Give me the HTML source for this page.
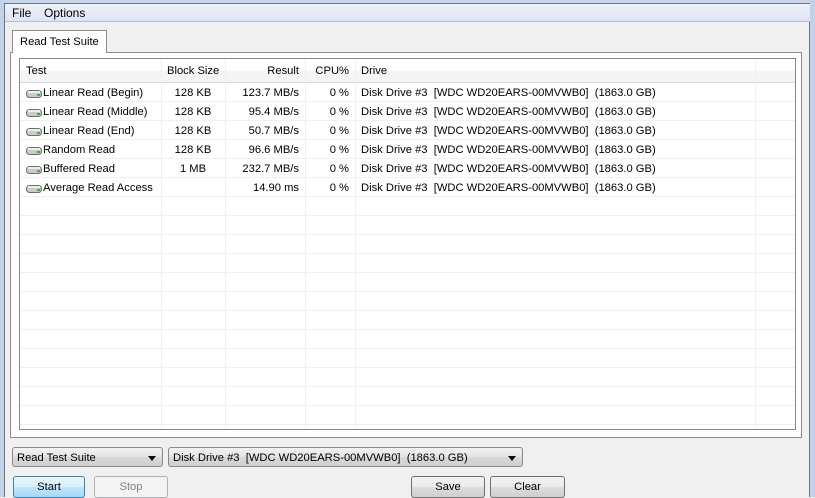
<!DOCTYPE html><html><head><style>
body{margin:0;width:815px;height:497px;overflow:hidden;background:#f0f0f0;font-family:"Liberation Sans",sans-serif;font-size:11.2px;color:#000;position:relative}
.a{position:absolute}
.cell{position:absolute;top:0;height:19px;line-height:19px;white-space:nowrap}
.btn{position:absolute;height:20px;border:1px solid #707070;border-radius:3px;background:linear-gradient(#f2f2f2,#ebebeb 50%,#dddddd 50%,#cfcfcf);text-align:center;line-height:20px}
.cb{position:absolute;height:20px;border:1px solid #8a8a8a;border-radius:3px;background:linear-gradient(#f2f2f2,#e4e4e4 50%,#d9d9d9 50%,#d0d0d0);line-height:20px;padding-left:4px;box-sizing:border-box}
.cb:after{content:"";position:absolute;right:6px;top:8px;border-left:4px solid transparent;border-right:4px solid transparent;border-top:5px solid #000}
</style></head><body>
<div class="a" style="left:0;top:0;width:815px;height:4px;background:#c9d6ea"></div>
<div class="a" style="left:0;top:0;width:4px;height:497px;background:#c3d2e8"></div>
<div class="a" style="left:810px;top:0;width:5px;height:497px;background:#c3d2e8"></div>
<div class="a" style="left:4px;top:3px;width:806px;height:494px;border-left:1px solid #6a7585;border-right:1px solid #6a7585;border-top:1px solid #6a7585;box-sizing:border-box"></div>
<div class="a" style="left:5px;top:4px;width:805px;height:17px;background:linear-gradient(#eef1fa,#dfe4f5);border-bottom:1px solid #b9bfd8"></div>
<div class="a" style="left:12px;top:5px;line-height:16px;font-size:12px">File</div>
<div class="a" style="left:44px;top:5px;line-height:16px;font-size:12px">Options</div>
<div class="a" style="left:10px;top:52px;width:792px;height:386px;border:1px solid #8d8d8d;background:#fff;box-sizing:border-box"></div>
<div class="a" style="left:12px;top:30px;width:95px;height:23px;border:1px solid #8d8d8d;border-bottom:none;background:#fff;line-height:22px;padding-left:7px;box-sizing:border-box">Read Test Suite</div>
<div class="a" style="left:19px;top:58px;width:777px;height:372px;border:1px solid #828790;background:#fff;box-sizing:border-box;overflow:hidden">
<div class="a" style="left:0;top:0;width:775px;height:23px;background:linear-gradient(#fff,#fff 50%,#f4f5f7 50%,#f4f5f7);border-bottom:1px solid #d5d5d5"></div>
<div id="g"></div>
</div>
<div class="cb" style="left:12px;top:447px;width:151px">Read Test Suite</div>
<div class="cb" style="left:168px;top:447px;width:355px">Disk Drive #3&nbsp; [WDC WD20EARS-00MVWB0]&nbsp; (1863.0 GB)</div>
<div class="btn" style="left:13px;top:476px;width:70px;border-color:#3c7fb1;background:linear-gradient(#eaf6fd,#d9f0fc 50%,#bee6fd 50%,#a7d9f5)">Start</div>
<div class="btn" style="left:94px;top:476px;width:72px;border-color:#adb2b5;background:#f4f4f4;color:#838383">Stop</div>
<div class="btn" style="left:411px;top:476px;width:72px">Save</div>
<div class="btn" style="left:490px;top:476px;width:73px">Clear</div>
<script>
var cols=[[0,141],[141,64],[205,80],[285,50],[335,400],[735,40]];
var g=document.getElementById('g'),h='';
cols.forEach(function(c,i){if(i>0)h+='<div class="a" style="left:'+(c[0])+'px;top:0;width:1px;height:372px;background:#f0f0f0"></div>';});
for(var y=42;y<372;y+=19)h+='<div class="a" style="left:0;top:'+y+'px;width:775px;height:1px;background:#f0f0f0"></div>';
var hd=[['Test','left',6],['Block Size','left',6],['Result','right',6],['CPU%','right',6],['Drive','left',6]];
hd.forEach(function(t,i){var c=cols[i];h+='<div class="cell" style="left:'+c[0]+'px;width:'+c[1]+'px;top:3px;text-align:'+t[1]+';box-sizing:border-box;padding:0 '+t[2]+'px">'+t[0]+'</div>';});
var rows=[['Linear Read (Begin)','128 KB','123.7 MB/s'],['Linear Read (Middle)','128 KB','95.4 MB/s'],['Linear Read (End)','128 KB','50.7 MB/s'],['Random Read','128 KB','96.6 MB/s'],['Buffered Read','1 MB','232.7 MB/s'],['Average Read Access','','14.90 ms']];
rows.forEach(function(r,k){var t=24+19*k;
h+='<svg class="a" style="left:6px;top:'+(t+4)+'px" width="16" height="11"><rect x="0.5" y="3.5" width="15" height="7" rx="3" fill="#c8cbc8" stroke="#6c6f6c"/><rect x="2" y="4" width="12" height="2" fill="#eee"/><rect x="11" y="7" width="3" height="2" fill="#3bb33b"/></svg>';
h+='<div class="cell" style="top:'+(t+1)+'px;left:23px">'+r[0]+'</div>';
h+='<div class="cell" style="top:'+(t+1)+'px;left:141px;width:64px;text-align:center">'+r[1]+'</div>';
h+='<div class="cell" style="top:'+(t+1)+'px;left:205px;width:80px;text-align:right;padding-right:6px;box-sizing:border-box">'+r[2]+'</div>';
h+='<div class="cell" style="top:'+(t+1)+'px;left:285px;width:50px;text-align:right;padding-right:6px;box-sizing:border-box">0 %</div>';
h+='<div class="cell" style="top:'+(t+1)+'px;left:341px">Disk Drive #3&nbsp; [WDC WD20EARS-00MVWB0]&nbsp; (1863.0 GB)</div>';});
g.innerHTML=h;
</script>
</body></html>
